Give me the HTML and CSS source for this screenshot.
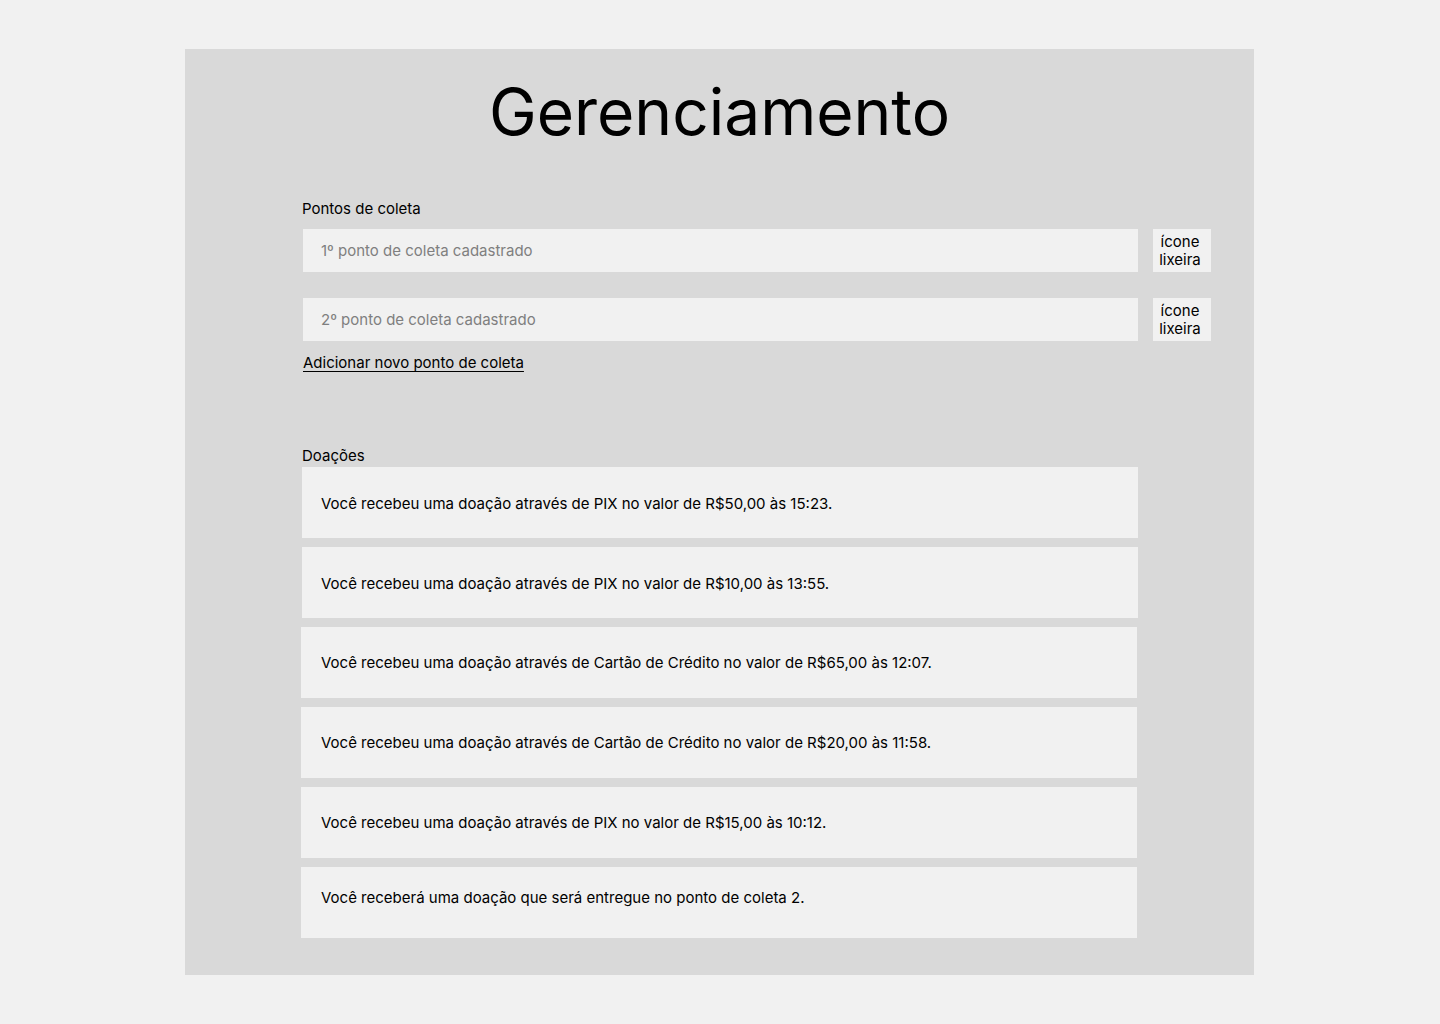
FILE: index.html
```html
<!DOCTYPE html>
<html lang="pt-BR">
<head>
<meta charset="utf-8">
<title>Gerenciamento</title>
<link rel="stylesheet" href="styles.css">
</head>
<body>
<main class="panel">
  <h1 class="title">Gerenciamento</h1>

  <section class="section points">
    <div class="label">Pontos de coleta</div>
    <div class="point-row">
      <div class="point-input">1º ponto de coleta cadastrado</div>
      <div class="trash">ícone<br>lixeira</div>
    </div>
    <div class="point-row second">
      <div class="point-input">2º ponto de coleta cadastrado</div>
      <div class="trash">ícone<br>lixeira</div>
    </div>
    <a class="add-link" href="#">Adicionar novo ponto de coleta</a>
  </section>

  <section class="section donations">
    <div class="label">Doações</div>
    <div class="cards">
      <div class="card">Você recebeu uma doação através de PIX no valor de R$50,00 às 15:23.</div>
      <div class="card">Você recebeu uma doação através de PIX no valor de R$10,00 às 13:55.</div>
      <div class="card card-alt">Você recebeu uma doação através de Cartão de Crédito no valor de R$65,00 às 12:07.</div>
      <div class="card card-alt">Você recebeu uma doação através de Cartão de Crédito no valor de R$20,00 às 11:58.</div>
      <div class="card card-alt">Você recebeu uma doação através de PIX no valor de R$15,00 às 10:12.</div>
      <div class="card card-alt card-last">Você receberá uma doação que será entregue no ponto de coleta 2.</div>
    </div>
  </section>
</main>
</body>
</html>
```

FILE: styles.css
```css
* {
  box-sizing: border-box;
}

html, body {
  margin: 0;
  padding: 0;
}

body {
  background: #f1f1f1;
  font-family: Inter, "Noto Sans", "Liberation Sans", sans-serif;
  color: #000;
}

.panel {
  margin: 49px 0 0 185px;
  width: 1069px;
  height: 926px;
  background: #d9d9d9;
  padding-top: 24px;
}

.title {
  margin: 0;
  font-size: 64px;
  font-weight: 400;
  line-height: 78px;
  text-align: center;
  letter-spacing: 0;
}

.section {
  margin-left: 117px;
}

.points {
  margin-top: 49px;
}

.label {
  font-size: 15px;
  line-height: 18px;
}

.point-row {
  display: flex;
  gap: 15px;
  margin-top: 11px;
  margin-left: 1px;
}

.point-row.second {
  margin-top: 26px;
}

.point-input {
  width: 835px;
  height: 43px;
  background: #f1f1f1;
  color: #7f7f7f;
  font-size: 15px;
  line-height: 18px;
  padding-left: 18px;
  display: flex;
  align-items: center;
}

.trash {
  width: 58px;
  height: 43px;
  background: #f1f1f1;
  font-size: 15px;
  line-height: 18px;
  padding-right: 4px;
  display: flex;
  align-items: center;
  justify-content: center;
  text-align: center;
}

.add-link {
  display: inline-block;
  margin-top: 13px;
  margin-left: 1px;
  font-size: 15px;
  line-height: 18px;
  color: #000;
  text-decoration: underline;
  text-underline-offset: 3px;
}

.donations {
  margin-top: 75px;
}

.cards {
  margin-top: 2px;
  display: flex;
  flex-direction: column;
  gap: 9px;
}

.card {
  width: 836px;
  height: 71px;
  background: #f1f1f1;
  font-size: 15px;
  line-height: 18px;
  padding: 2px 0 0 19px;
  display: flex;
  align-items: center;
}

.card-alt {
  margin-left: -1px;
  padding: 0 0 0 20px;
}

.card-last {
  padding: 0 0 10px 20px;
}
```
